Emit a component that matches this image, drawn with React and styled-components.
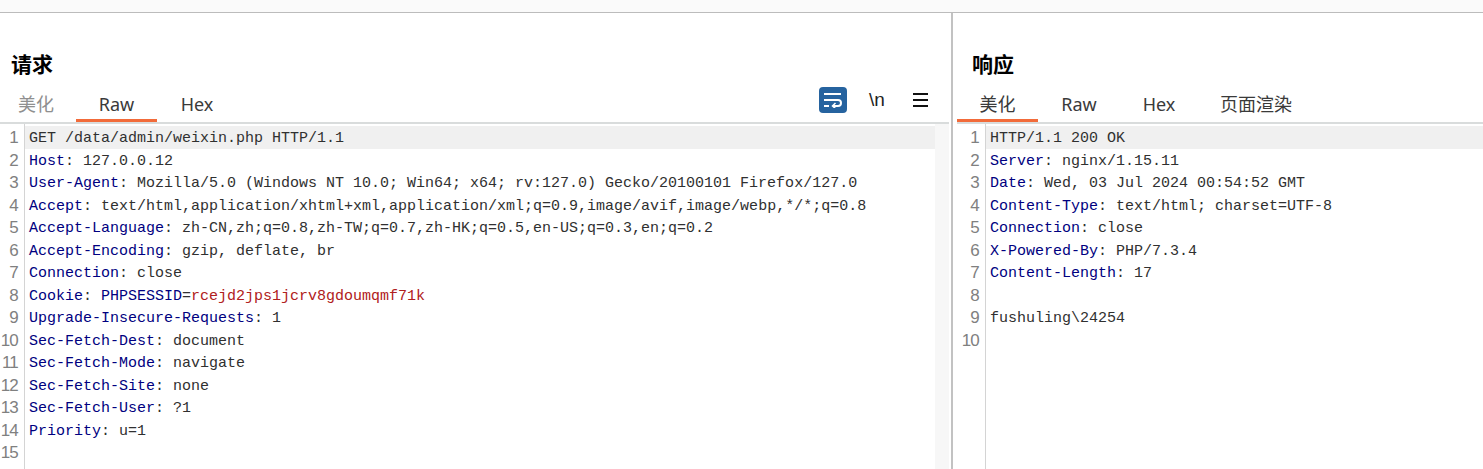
import styled, { createGlobalStyle } from "styled-components";

const GlobalStyle = createGlobalStyle`
  html, body {
    margin: 0;
    padding: 0;
    background: #fff;
    overflow: hidden;
  }
`;

const Page = styled.div`
  width: 1483px;
  height: 469px;
  display: flex;
  flex-flow: column nowrap;
  overflow: hidden;
`;

const TopStrip = styled.div`
  height: 12px;
  flex-shrink: 0;
  background: #fafafa;
  border-bottom: 1px solid #bcbcbc;
`;

const Panes = styled.div`
  flex: 1;
  min-height: 0;
  display: flex;
`;

const Pane = styled.section`
  width: ${(p) => p.$width}px;
  flex-shrink: 0;
  display: flex;
  flex-flow: column nowrap;
  min-height: 0;
`;

const Divider = styled.div`
  width: 2px;
  flex-shrink: 0;
  background: #c2c2c2;
`;

const Title = styled.h2`
  margin: 0;
  padding: 37px 0 0 ${(p) => p.$left}px;
  height: 32px;
  font: bold 21px/26px "Noto Sans CJK SC", sans-serif;
  color: #000;
`;

const TabBar = styled.div`
  height: 42px;
  margin-left: ${(p) => p.$inset}px;
  margin-right: ${(p) => p.$end}px;
  box-sizing: border-box;
  display: flex;
  align-items: flex-end;
  border-bottom: 2px solid #d9dcdc;
`;

const Tab = styled.div`
  width: ${(p) => p.$width}px;
  height: 31px;
  box-sizing: border-box;
  padding-top: 1px;
  padding-right: ${(p) => p.$shift || 0}px;
  text-align: center;
  font: 18px/24px "Noto Sans", "Noto Sans CJK SC", sans-serif;
  color: ${(p) => (p.$muted ? "#8f8f8f" : "#3a3a3a")};
  border-bottom: 3px solid ${(p) => (p.$active ? "#f26b3a" : "transparent")};
`;

const Tools = styled.div`
  margin-left: auto;
  margin-right: 21px;
  align-self: flex-start;
  display: flex;
  align-items: center;
  gap: 15px;
  padding-top: 5px;
`;

const WrapButton = styled.div`
  width: 28px;
  height: 26px;
  border-radius: 4px;
  background: #26639f;
  display: flex;
  align-items: center;
  justify-content: center;
`;

const ToolLabel = styled.span`
  width: 30px;
  text-align: center;
  font: 19px/24px "Liberation Sans", sans-serif;
  color: #222;
`;

const MenuIcon = styled.svg`
  width: 15px;
  height: 14px;
  margin-left: 6px;
  display: block;
`;

const Editor = styled.div`
  flex: 1;
  min-height: 0;
  display: flex;
  overflow: hidden;
`;

const Gutter = styled.div`
  width: ${(p) => p.$width}px;
  flex-shrink: 0;
  box-sizing: border-box;
  padding-top: 2px;
  border-right: 1px solid #d4d4d4;
`;

const LineNo = styled.div`
  height: 22.5px;
  padding-right: 6px;
  text-align: right;
  font: 17px/24.5px "Liberation Sans", sans-serif;
  letter-spacing: -0.8px;
  color: #808080;
`;

const Code = styled.div`
  flex: 1;
  min-width: 0;
  padding-top: 2px;
`;

const Line = styled.div`
  height: 22.5px;
  padding-left: 4px;
  white-space: pre;
  font: 15px/25px "Liberation Mono", monospace;
  color: #303030;
  background: ${(p) => (p.$current ? "#f0f0f0" : "transparent")};
`;

const Key = styled.span`
  color: #000080;
`;

const Cookie = styled.span`
  color: #b02020;
`;

const Scrollbar = styled.div`
  width: 14px;
  margin-right: 2px;
  flex-shrink: 0;
  background: #f7f7f7;
`;

const requestLines = [
  ["", "GET /data/admin/weixin.php HTTP/1.1"],
  ["Host", ": 127.0.0.12"],
  ["User-Agent", ": Mozilla/5.0 (Windows NT 10.0; Win64; x64; rv:127.0) Gecko/20100101 Firefox/127.0"],
  ["Accept", ": text/html,application/xhtml+xml,application/xml;q=0.9,image/avif,image/webp,*/*;q=0.8"],
  ["Accept-Language", ": zh-CN,zh;q=0.8,zh-TW;q=0.7,zh-HK;q=0.5,en-US;q=0.3,en;q=0.2"],
  ["Accept-Encoding", ": gzip, deflate, br"],
  ["Connection", ": close"],
  ["Cookie", ": ", "PHPSESSID", "rcejd2jps1jcrv8gdoumqmf71k"],
  ["Upgrade-Insecure-Requests", ": 1"],
  ["Sec-Fetch-Dest", ": document"],
  ["Sec-Fetch-Mode", ": navigate"],
  ["Sec-Fetch-Site", ": none"],
  ["Sec-Fetch-User", ": ?1"],
  ["Priority", ": u=1"],
  ["", ""],
];

const responseLines = [
  ["", "HTTP/1.1 200 OK"],
  ["Server", ": nginx/1.15.11"],
  ["Date", ": Wed, 03 Jul 2024 00:54:52 GMT"],
  ["Content-Type", ": text/html; charset=UTF-8"],
  ["Connection", ": close"],
  ["X-Powered-By", ": PHP/7.3.4"],
  ["Content-Length", ": 17"],
  ["", ""],
  ["", "fushuling\\24254"],
  ["", ""],
];

const CodeView = ({ lines, gutter }) => (
  <Editor>
    <Gutter $width={gutter}>
      {lines.map((_, i) => (
        <LineNo key={i}>{i + 1}</LineNo>
      ))}
    </Gutter>
    <Code>
      {lines.map(([key, rest, name, value], i) => (
        <Line key={i} $current={i === 0}>
          {key && <Key>{key}</Key>}
          {rest}
          {name && <Key>{name}</Key>}
          {name && "="}
          {value && <Cookie>{value}</Cookie>}
        </Line>
      ))}
    </Code>
  </Editor>
);

const App = () => {
  return (
    <Page>
      <GlobalStyle />
      <TopStrip />
      <Panes>
        <Pane $width={951}>
          <Title $left={11}>请求</Title>
          <TabBar $inset={0} $end={2}>
            <Tab $width={76} $shift={4} $muted>美化</Tab>
            <Tab $width={81} $active>Raw</Tab>
            <Tab $width={80}>Hex</Tab>
            <Tools>
              <WrapButton>
                <svg width="18" height="16" viewBox="0 0 18 16" fill="none" stroke="#fff" strokeWidth="2">
                  <path d="M0 2h17" />
                  <path d="M0 8h14a3 3 0 0 1 0 6H9" />
                  <path d="M11.5 11l-3 3 3 2.5" strokeWidth="1.5" />
                  <path d="M0 14h5" />
                </svg>
              </WrapButton>
              <ToolLabel>\n</ToolLabel>
              <MenuIcon viewBox="0 0 15 14" fill="none" stroke="#111" strokeWidth="2">
                <path d="M0 1h15M0 7h15M0 13h15" />
              </MenuIcon>
            </Tools>
          </TabBar>
          <Editor>
            <CodeView lines={requestLines} gutter={25} />
            <Scrollbar />
          </Editor>
        </Pane>
        <Divider />
        <Pane $width={530}>
          <Title $left={19}>响应</Title>
          <TabBar $inset={4} $end={0}>
            <Tab $width={81} $active>美化</Tab>
            <Tab $width={82}>Raw</Tab>
            <Tab $width={78}>Hex</Tab>
            <Tab $width={116}>页面渲染</Tab>
          </TabBar>
          <CodeView lines={responseLines} gutter={33} />
        </Pane>
      </Panes>
    </Page>
  );
};

export default App;
